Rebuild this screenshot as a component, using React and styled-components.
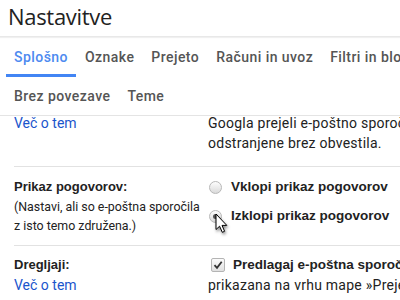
import React from "react";
import styled, { createGlobalStyle } from "styled-components";

const Global = createGlobalStyle`
  html, body { margin: 0; padding: 0; background: #fff; }
  body { font-family: Roboto, Arial, sans-serif; }
`;

const Page = styled.div`
  width: 400px;
  height: 300px;
  overflow: hidden;
  position: relative;
  background: #fff;
`;

const Header = styled.header`
  height: 36px;
  display: flex;
  align-items: center;
  padding-left: 8px;
  border-bottom: 1px solid #e8e8e8;
  box-shadow: 0 1px 1px rgba(0, 0, 0, 0.06);
`;

const Title = styled.h1`
  margin: 0;
  font-family: "Open Sans", sans-serif;
  font-weight: 400;
  font-size: 22px;
  color: #222;
  letter-spacing: -0.3px;
  margin-top: -4px;
`;

const TabBar = styled.nav`
  border-bottom: 1px solid #e4e4e4;
  padding-left: 5.5px;
`;

const TabRow = styled.div`
  display: flex;
  height: ${(p) => p.$h}px;
  white-space: nowrap;
`;

const Tab = styled.div`
  padding: 3px 8.5px 0;
  display: flex;
  align-items: center;
  font-family: Roboto, sans-serif;
  font-weight: 500;
  font-size: 14px;
  letter-spacing: 0.45px;
  color: ${(p) => (p.$active ? "#4d8af0" : "#555")};
  border-bottom: 3px solid ${(p) => (p.$active ? "#4285f4" : "transparent")};
  box-sizing: border-box;
`;

const Viewport = styled.div`
  overflow: hidden;
`;

const Content = styled.div`
  margin-top: -3px;
`;

const Row = styled.section`
  display: grid;
  grid-template-columns: 194px 1fr;
  margin-left: 14px;
  padding: ${(p) => p.$pad};
  border-top: ${(p) => (p.$line ? "1px solid #e2e2e2" : "none")};
  font-size: 14px;
  line-height: 20px;
  color: #222;
  white-space: nowrap;
`;

const LabelCol = styled.div`
  display: flex;
  flex-direction: column;
  overflow: hidden;
`;

const Label = styled.div`
  font-family: Arial, "Liberation Sans", sans-serif;
  font-weight: bold;
  font-size: 13px;
`;

const Note = styled.div`
  font-size: 12.4px;
  line-height: 19px;
  color: #222;
`;

const Link = styled.a`
  color: #1a55cc;
  text-decoration: none;
  font-size: 14px;
`;

const ValueCol = styled.div`
  display: flex;
  flex-direction: column;
  gap: ${(p) => p.$gap || 0}px;
  overflow: hidden;
`;

const Option = styled.label`
  display: flex;
  align-items: center;
  font-family: Arial, "Liberation Sans", sans-serif;
  font-weight: bold;
  font-size: 13.5px;
`;

const Radio = styled.span`
  width: 11px;
  height: 11px;
  border-radius: 50%;
  border: 1px solid #b8b8b8;
  background: linear-gradient(#fdfdfd, #dadada);
  margin: 0 9px 0 1px;
  display: flex;
  align-items: center;
  justify-content: center;
  flex: none;
  &::after {
    content: "";
    width: 5px;
    height: 5px;
    border-radius: 50%;
    background: ${(p) => (p.$checked ? "#555" : "transparent")};
  }
`;

const Check = styled.span`
  width: 12px;
  height: 12px;
  border: 1px solid #b4b4b4;
  border-radius: 2px;
  background: linear-gradient(#fbfbfb, #e0e0e0);
  margin: 0 8px 0 3px;
  display: flex;
  align-items: center;
  justify-content: center;
  flex: none;
`;

const Plain = styled.div`
  font-weight: normal;
  letter-spacing: 0.25px;
`;

const Cursor = styled.svg`
  position: absolute;
  left: 215px;
  top: 213px;
  filter: drop-shadow(1px 2px 1.5px rgba(0, 0, 0, 0.45));
`;

export default function App() {
  return (
    <Page>
      <Global />
      <Header>
        <Title>Nastavitve</Title>
      </Header>
      <TabBar>
        <TabRow $h={40}>
          <Tab $active>Splošno</Tab>
          <Tab>Oznake</Tab>
          <Tab>Prejeto</Tab>
          <Tab>Računi in uvoz</Tab>
          <Tab>Filtri in blokirani naslovi</Tab>
        </TabRow>
        <TabRow $h={38}>
          <Tab>Brez povezave</Tab>
          <Tab>Teme</Tab>
        </TabRow>
      </TabBar>
      <Viewport>
        <Content>
          <Row $pad="0 0 13px">
            <LabelCol>
              <Link href="#">Več o tem</Link>
            </LabelCol>
            <ValueCol>
              <Plain>Googla prejeli e-poštno sporočilo, bo to sporočilo</Plain>
              <Plain>odstranjene brez obvestila.</Plain>
            </ValueCol>
          </Row>
          <Row $line $pad="10px 0 10px">
            <LabelCol>
              <Label>Prikaz pogovorov:</Label>
              <Note>(Nastavi, ali so e-poštna sporočila</Note>
              <Note>z isto temo združena.)</Note>
            </LabelCol>
            <ValueCol $gap={9}>
              <Option>
                <Radio />
                Vklopi prikaz pogovorov
              </Option>
              <Option>
                <Radio $checked />
                Izklopi prikaz pogovorov
              </Option>
            </ValueCol>
          </Row>
          <Row $line $pad="9px 0 10px">
            <LabelCol>
              <Label>Dregljaji:</Label>
              <Link href="#">Več o tem</Link>
            </LabelCol>
            <ValueCol>
              <Option>
                <Check>
                  <svg width="10" height="10" viewBox="0 0 10 10">
                    <path d="M1.5 5.2 L4 7.8 L8.7 1.8" fill="none" stroke="#333" strokeWidth="1.8" />
                  </svg>
                </Check>
                Predlagaj e-poštna sporočila za odgovor
              </Option>
              <Plain>prikazana na vrhu mape »Prejeto«</Plain>
            </ValueCol>
          </Row>
        </Content>
      </Viewport>
      <Cursor width="14" height="22" viewBox="0 0 14 22">
        <path d="M1 1 L1 16.5 L4.6 13.2 L7.3 19.3 L9.6 18.3 L7 12.4 L11.8 12.4 Z" fill="#fff" stroke="#000" strokeWidth="1" strokeLinejoin="round" />
      </Cursor>
    </Page>
  );
}
